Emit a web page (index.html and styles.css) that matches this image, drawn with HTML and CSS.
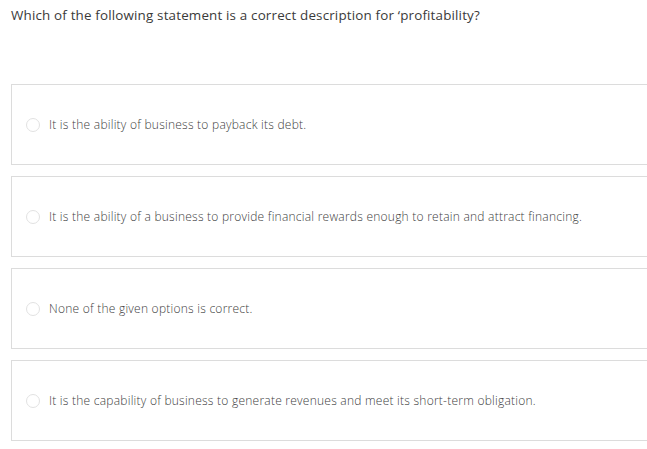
FILE: index.html
```html
<!DOCTYPE html>
<html>
<head>
<meta charset="utf-8">
<link rel="stylesheet" href="styles.css">
</head>
<body>
<div class="page">
  <p class="question">Which of the following statement is a correct description for ‘profitability?</p>
  <div class="options">
    <label class="option"><span class="radio"></span><span class="text">It is the ability of business to payback its debt.</span></label>
    <label class="option"><span class="radio"></span><span class="text">It is the ability of a business to provide financial rewards enough to retain and attract financing.</span></label>
    <label class="option"><span class="radio"></span><span class="text">None of the given options is correct.</span></label>
    <label class="option"><span class="radio"></span><span class="text">It is the capability of business to generate revenues and meet its short-term obligation.</span></label>
  </div>
</div>
</body>
</html>
```

FILE: styles.css
```css
html, body {
  margin: 0;
  padding: 0;
  background: #fff;
  overflow: hidden;
}
.page {
  padding: 6px 0 0 11px;
  font-family: "Open Sans", "Liberation Sans", sans-serif;
  color: #333;
}
.question {
  margin: 0;
  font-size: 13.4px;
  letter-spacing: 0.17px;
  line-height: 18px;
  color: #3a3a3a;
}
.options {
  margin-top: 60px;
  margin-right: -40px;
  display: flex;
  flex-direction: column;
  gap: 11px;
}
.option {
  display: flex;
  align-items: center;
  height: 79px;
  border: 1px solid #dcdcdc;
  padding-left: 14px;
  background: #fff;
}
.radio {
  width: 12px;
  height: 12px;
  border: 1px solid #e2e2e2;
  border-radius: 50%;
  margin-right: 9px;
  flex: none;
}
.text {
  font-size: 12px;
  font-weight: 300;
  letter-spacing: 0.24px;
  color: #404040;
}
```
